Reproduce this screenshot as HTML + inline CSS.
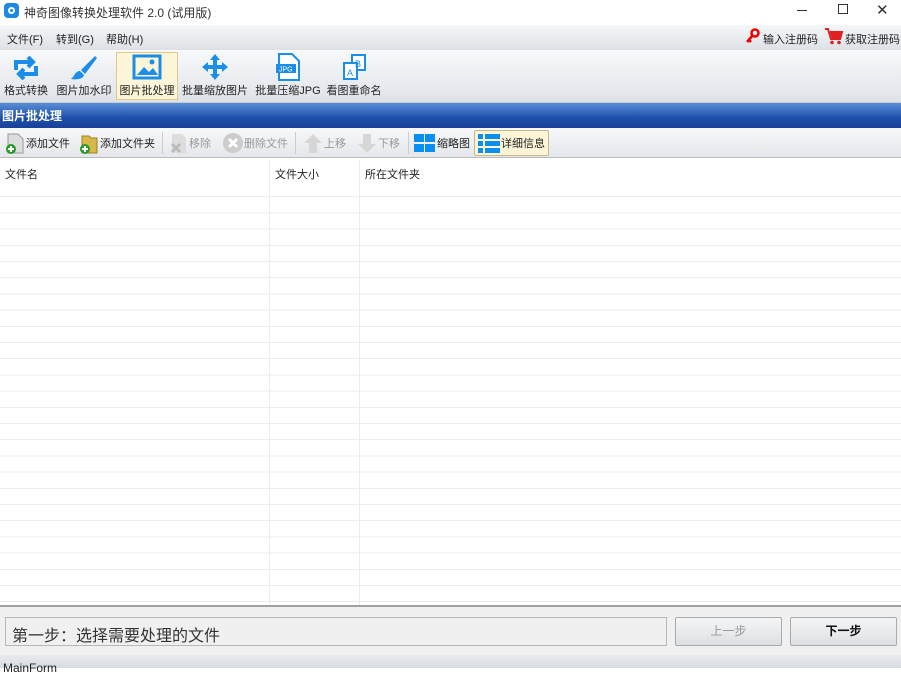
<!DOCTYPE html><html><head><meta charset="utf-8"><style>
*{margin:0;padding:0;box-sizing:border-box}
body{width:901px;height:668px;overflow:hidden;background:#fff;font-family:"Liberation Sans","Noto Sans CJK SC",sans-serif;font-size:11px;color:#222;position:relative}
.a{position:absolute}
.tb{display:flex;flex-direction:column;align-items:center;justify-content:flex-end;padding-bottom:3px;height:50px;top:51px}
.tb span{font-size:11px;white-space:nowrap}
.st{display:flex;align-items:center;font-size:11px;top:131px;height:24px}
.g{color:#999}
</style></head><body>
<div class="a" style="left:0;top:0;width:901px;height:24px;background:#fff"></div>
<div class="a" style="left:4px;top:3px;width:15px;height:15px;border-radius:4px;background:#1e88e5"><div style="margin:4px;width:7px;height:7px;border:2px solid #fff;border-radius:50%"></div></div>
<div class="a" style="left:24px;top:4px;font-size:12px;color:#333">神奇图像转换处理软件 2.0 (试用版)</div>
<div class="a" style="left:797px;top:10px;width:10px;height:1px;background:#333"></div>
<div class="a" style="left:838px;top:4px;width:10px;height:10px;border:1px solid #333"></div>
<div class="a" style="left:876px;top:1px;font-size:15px;color:#333">✕</div>
<div class="a" style="left:0;top:25px;width:901px;height:25px;background:linear-gradient(#f5f6f8,#dde1e6)"></div>
<div class="a" style="left:7px;top:31px">文件(F)</div>
<div class="a" style="left:56px;top:31px">转到(G)</div>
<div class="a" style="left:106px;top:31px">帮助(H)</div>
<svg class="a" style="left:744px;top:28px" width="16" height="16"><circle cx="11" cy="5" r="3.5" fill="none" stroke="#e00" stroke-width="2.5"/><path d="M9 7L3 14M5 12l2 2" stroke="#e00" stroke-width="2.5"/></svg>
<div class="a" style="left:763px;top:31px">输入注册码</div>
<svg class="a" style="left:824px;top:27px" width="20" height="18"><path d="M1 2h3l3 10h9l2-7H6" fill="none" stroke="#e02020" stroke-width="2"/><path d="M6 5h12l-2 7H8z" fill="#e02020"/><circle cx="8" cy="15.5" r="1.8" fill="#e02020"/><circle cx="15" cy="15.5" r="1.8" fill="#e02020"/></svg>
<div class="a" style="left:845px;top:31px">获取注册码</div>
<div class="a" style="left:0;top:50px;width:901px;height:53px;background:linear-gradient(#f8f9fb,#dfe3e8);border-bottom:1px solid #c8ccd2"></div>
<div class="a" style="left:116px;top:52px;width:62px;height:48px;background:#fdf5d8;border:1px solid #e0c98a"></div>
<div class="a tb" style="left:2px;width:48px"><svg width="30" height="28" viewBox="0 0 30 28"><path d="M5 16V8h16M17 3l5 5-5 5M25 12v8H9M13 25l-5-5 5-5" fill="none" stroke="#1a8ee8" stroke-width="4"/></svg><span>格式转换</span></div>
<div class="a tb" style="left:54px;width:60px"><svg width="30" height="28"><path d="M26 2 L12 16 L16 20 L28 4Z" fill="#1a8ee8"/><path d="M11 17c-5 0-5 5-9 8 6 1 12 0 13-4z" fill="#1a8ee8"/></svg><span>图片加水印</span></div>
<div class="a tb" style="left:117px;width:60px"><svg width="30" height="28"><rect x="2" y="2" width="26" height="22" fill="none" stroke="#1a8ee8" stroke-width="3"/><path d="M5 21l7-8 5 5 4-4 5 7z" fill="#1a8ee8"/><circle cx="20" cy="8" r="2.5" fill="#1a8ee8"/></svg><span>图片批处理</span></div>
<div class="a tb" style="left:181px;width:68px"><svg width="30" height="30"><path d="M15 2l5 6h-3v5h5v-3l6 5-6 5v-3h-5v5h3l-5 6-5-6h3v-5H8v3l-6-5 6-5v3h5V8h-3z" fill="#1a8ee8"/></svg><span>批量缩放图片</span></div>
<div class="a tb" style="left:254px;width:68px"><svg width="30" height="30"><path d="M6 2h13l7 7v19H6z" fill="#fff" stroke="#1a8ee8" stroke-width="2"/><rect x="3" y="12" width="20" height="9" fill="#1a8ee8"/><text x="6" y="19.5" font-size="7" fill="#fff" font-family="Liberation Sans">JPG</text></svg><span>批量压缩JPG</span></div>
<div class="a tb" style="left:325px;width:58px"><svg width="30" height="30"><rect x="13" y="3" width="13" height="15" fill="#fff" stroke="#1a8ee8" stroke-width="2"/><rect x="5" y="11" width="13" height="16" fill="#fff" stroke="#1a8ee8" stroke-width="2"/><text x="16" y="15" font-size="9" fill="#1a8ee8" font-family="Liberation Sans">B</text><text x="8" y="24" font-size="9" fill="#1a8ee8" font-family="Liberation Sans">A</text></svg><span>看图重命名</span></div>
<div class="a" style="left:0;top:103px;width:901px;height:25px;background:linear-gradient(#5a8fd8,#1e4fa8 60%,#17409a);color:#fff;font-weight:bold;font-size:12px;padding:4px 2px">图片批处理</div>
<div class="a" style="left:0;top:128px;width:901px;height:30px;background:linear-gradient(#f7f8fa,#e4e7eb);border-bottom:1px solid #bbb"></div>
<div class="a st" style="left:4px"><svg width="22" height="22"><path d="M4 2h10l5 5v14H4z" fill="#ddd" stroke="#999"/><circle cx="7" cy="17" r="5" fill="#2a9a2a"/><path d="M7 14v6M4 17h6" stroke="#fff" stroke-width="2"/></svg>添加文件</div>
<div class="a st" style="left:78px"><svg width="22" height="22"><path d="M4 4h7l2 2h6v15H4z" fill="#d8b84a" stroke="#a08020"/><circle cx="7" cy="17" r="5" fill="#2a9a2a"/><path d="M7 14v6M4 17h6" stroke="#fff" stroke-width="2"/></svg>添加文件夹</div>
<div class="a" style="left:162px;top:132px;width:1px;height:22px;background:#ccc"></div>
<div class="a st g" style="left:167px"><svg width="22" height="22"><path d="M5 2h10l4 4v15H5z" fill="#ddd"/><path d="M5 12l8 8M13 12l-8 8" stroke="#bbb" stroke-width="3"/></svg>移除</div>
<div class="a st g" style="left:222px"><svg width="22" height="22"><circle cx="11" cy="11" r="10" fill="#ccc"/><path d="M7 7l8 8M15 7l-8 8" stroke="#fff" stroke-width="3"/></svg>删除文件</div>
<div class="a" style="left:295px;top:132px;width:1px;height:22px;background:#ccc"></div>
<div class="a st g" style="left:302px"><svg width="22" height="22"><path d="M11 2l9 9h-5v10H7V11H2z" fill="#d6d6d6"/></svg>上移</div>
<div class="a st g" style="left:356px"><svg width="22" height="22"><path d="M11 21l9-9h-5V2H7v10H2z" fill="#d6d6d6"/></svg>下移</div>
<div class="a" style="left:408px;top:132px;width:1px;height:22px;background:#ccc"></div>
<div class="a" style="left:474px;top:130px;width:75px;height:26px;background:#fdf5d8;border:1px solid #c8b888;border-radius:2px"></div>
<div class="a st" style="left:413px"><svg width="24" height="22"><rect x="1" y="2" width="10" height="8" fill="#0a8fef"/><rect x="12" y="2" width="10" height="8" fill="#0a8fef"/><rect x="1" y="12" width="10" height="8" fill="#0a8fef"/><rect x="12" y="12" width="10" height="8" fill="#0a8fef"/></svg>缩略图</div>
<div class="a st" style="left:477px"><svg width="24" height="22"><rect x="1" y="2" width="5" height="5" fill="#0a8fef"/><rect x="8" y="2" width="15" height="5" fill="#0a8fef"/><rect x="1" y="9" width="5" height="5" fill="#0a8fef"/><rect x="8" y="9" width="15" height="5" fill="#0a8fef"/><rect x="1" y="16" width="5" height="5" fill="#0a8fef"/><rect x="8" y="16" width="15" height="5" fill="#0a8fef"/></svg>详细信息</div>
<div class="a" style="left:0;top:181px;width:901px;height:424px;background:repeating-linear-gradient(#fff 0 15.2px,#ececec 15.2px 16.2px)"></div>
<div class="a" style="left:269px;top:160px;width:1px;height:445px;background:#ececec"></div>
<div class="a" style="left:359px;top:160px;width:1px;height:445px;background:#ececec"></div>
<div class="a" style="left:5px;top:166px">文件名</div>
<div class="a" style="left:275px;top:166px">文件大小</div>
<div class="a" style="left:365px;top:166px">所在文件夹</div>
<div class="a" style="left:0;top:605px;width:901px;height:2px;background:#a0a0a0"></div>
<div class="a" style="left:0;top:607px;width:901px;height:48px;background:#f0f0f0"></div>
<div class="a" style="left:5px;top:617px;width:662px;height:29px;border:1px solid #b8b8b8;background:#f0f0f0;font-size:16px;padding:4px 6px;color:#333">第一步：选择需要处理的文件</div>
<div class="a" style="left:675px;top:617px;width:107px;height:29px;border:1px solid #aaa;border-radius:2px;background:linear-gradient(#f4f5f6,#dde0e3);text-align:center;line-height:27px;color:#999;font-size:12px">上一步</div>
<div class="a" style="left:790px;top:617px;width:107px;height:29px;border:1px solid #aaa;border-radius:2px;background:linear-gradient(#f4f5f6,#dde0e3);text-align:center;line-height:27px;color:#111;font-size:12px;font-weight:bold">下一步</div>
<div class="a" style="left:0;top:655px;width:901px;height:13px;background:linear-gradient(#e8ebee,#d6dbe0)"></div>
<div class="a" style="left:3px;top:661px;font-size:12px">MainForm</div>
</body></html>
